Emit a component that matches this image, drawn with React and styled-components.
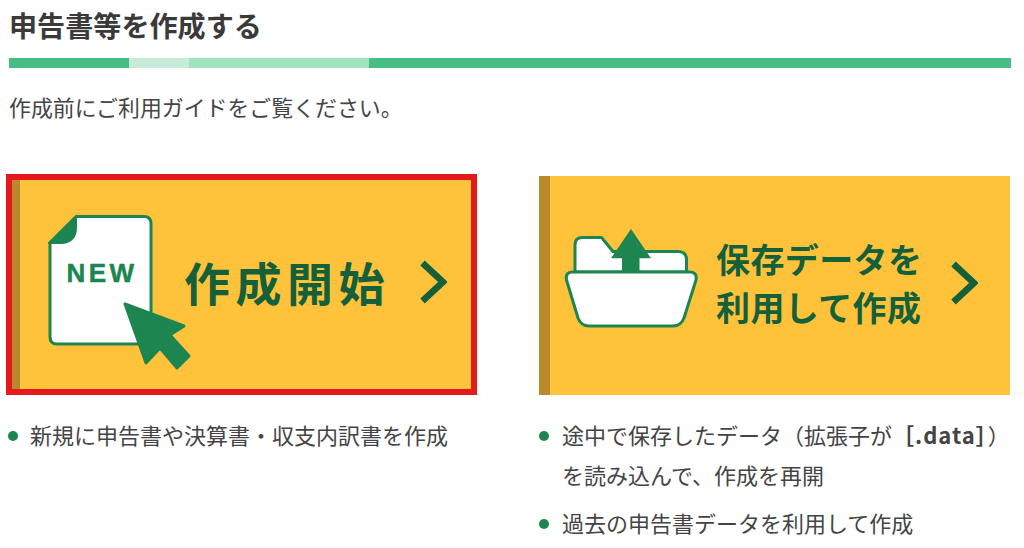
import React from "react";
import styled, { createGlobalStyle } from "styled-components";

const Global = createGlobalStyle`
  html, body { margin: 0; padding: 0; background: #fff; }
  body { font-family: "Noto Sans CJK JP", "Noto Sans", sans-serif; color: #444; }
`;

const Page = styled.main`
  width: 1024px;
  height: 548px;
  overflow: hidden;
  box-sizing: border-box;
  padding: 0 13px 0 9px;
`;

const Title = styled.h1`
  margin: 0;
  padding-top: 6px;
  height: 58px;
  box-sizing: border-box;
  font-size: 28.1px;
  line-height: 38px;
  font-weight: 700;
  color: #3a3a3a;
`;

const Bar = styled.div`
  display: flex;
  height: 10px;
`;

const Segment = styled.span`
  width: ${(p) => p.$w};
  flex: ${(p) => (p.$w ? "none" : "1")};
  background: ${(p) => p.$c};
`;

const Intro = styled.p`
  margin: 0;
  padding-top: 23px;
  height: 106px;
  box-sizing: border-box;
  font-size: 21.9px;
  line-height: 32px;
  color: #444;
`;

const Columns = styled.div`
  display: grid;
  grid-template-columns: 471px 471px;
  column-gap: 62px;
  margin-left: -3px;
`;

const Column = styled.section`
  display: flex;
  flex-direction: column;
`;

const Card = styled.a`
  display: flex;
  box-sizing: border-box;
  height: 221px;
  background: #ffc23b;
  ${(p) => (p.$selected ? "border: 6px solid #e3191b;" : "border-top: 2px solid #fff;")}
`;

const Stripe = styled.span`
  flex: none;
  width: ${(p) => p.$w}px;
  background: #b88a2b;
`;

const CardBody = styled.span`
  flex: 1;
  display: flex;
  align-items: center;
  padding-left: ${(p) => p.$pad}px;
`;

const IconBox = styled.span`
  flex: none;
  display: flex;
  width: ${(p) => p.$w}px;
  margin-top: ${(p) => p.$top || 0}px;
  svg { display: block; overflow: visible; }
`;

const CardLabel = styled.span`
  flex: none;
  width: ${(p) => p.$w}px;
  margin-left: ${(p) => p.$gap}px;
  margin-top: ${(p) => p.$top}px;
  font-weight: 700;
  color: #14603a;
  font-size: ${(p) => p.$size}px;
  line-height: ${(p) => p.$lh}px;
  letter-spacing: ${(p) => p.$ls}px;
  white-space: nowrap;
`;

const Chevron = styled.svg`
  flex: none;
  display: block;
  width: 28px;
  height: 44px;
  margin-top: -6px;
  margin-left: ${(p) => p.$gap}px;
`;

const List = styled.ul`
  list-style: none;
  margin: 0;
  padding: 19px 0 0 ${(p) => p.$inset}px;
`;

const Item = styled.li`
  position: relative;
  padding-left: ${(p) => p.$indent}px;
  margin-bottom: 8px;
  font-size: 22px;
  line-height: 40px;
  color: #444;
  white-space: nowrap;
  &::before {
    content: "";
    position: absolute;
    left: 0;
    top: 17px;
    width: 10px;
    height: 10px;
    border-radius: 50%;
    background: #1b8450;
  }
`;

const Strong = styled.b`
  font-weight: 700;
  letter-spacing: 1px;
`;

const DocIcon = () => (
  <svg width="142" height="155" viewBox="0 0 142 155">
    <path d="M29 1.500H96q7 0 7 7V122q0 7-7 7H9q-7 0-7-7V28Z" fill="#fff" stroke="#1c8550" strokeWidth="3" strokeLinejoin="round" />
    <path d="M1 28 28 1V12q0 15-14 16Z" fill="#1c8550" stroke="#1c8550" strokeWidth="2" strokeLinejoin="round" />
    <text x="18.500" y="67" fontFamily="'Liberation Sans', sans-serif" fontWeight="700" fontSize="26" letterSpacing="3.500" fill="#1c8550" stroke="#1c8550" strokeWidth="0.500">NEW</text>
    <path d="M77 89 136 111 122 120 141 141 129 153 112 133 98 148Z" fill="#1c8550" stroke="#1c8550" strokeWidth="3" strokeLinejoin="round" />
  </svg>
);

const FolderIcon = () => (
  <svg width="132" height="100" viewBox="0 0 132 100">
    <path d="M10 44V17q0-7.500 7-7.500H36.500L48 23.500H113q8.500 0 8.500 8.500V44Z" fill="#fff" stroke="#1c8550" strokeWidth="3" strokeLinejoin="round" />
    <path d="M66 1 86 30.300H74.500V44H57V30.300H46Z" fill="#1c8550" />
    <path d="M8 44H124.500q8 0 6.500 8L119 90q-3 8-11 8H24q-8 0-11-8L1.500 52q-1.500-8 6.500-8Z" fill="#fff" stroke="#1c8550" strokeWidth="3" strokeLinejoin="round" />
  </svg>
);

const ChevronIcon = ({ gap }) => (
  <Chevron $gap={gap} viewBox="0 0 28 44">
    <path d="M3.500 3 24 22 3.500 41" fill="none" stroke="#14603a" strokeWidth="6.500" />
  </Chevron>
);

export default function App() {
  return (
    <Page>
      <Global />
      <Title>申告書等を作成する</Title>
      <Bar>
        <Segment $w="120px" $c="#45bd85" />
        <Segment $w="60px" $c="#c6ebd8" />
        <Segment $w="180px" $c="#a0e3bf" />
        <Segment $c="#45bd85" />
      </Bar>
      <Intro>作成前にご利用ガイドをご覧ください。</Intro>
      <Columns>
        <Column>
          <Card $selected>
            <Stripe $w={8} />
            <CardBody $pad={28}>
              <IconBox $w={140} $top={16}><DocIcon /></IconBox>
              <CardLabel $w={201} $gap={-4} $top={-8} $size={46} $lh={56} $ls={5.500}>作成開始</CardLabel>
              <ChevronIcon gap={34} />
            </CardBody>
          </Card>
          <List $inset={2}>
            <Item $indent={22}>新規に申告書や決算書・収支内訳書を作成</Item>
          </List>
        </Column>
        <Column>
          <Card>
            <Stripe $w={11} />
            <CardBody $pad={15}>
              <IconBox $w={132} $top={-16}><FolderIcon /></IconBox>
              <CardLabel $w={205} $gap={19} $top={-6} $size={34} $lh={48} $ls={0.400}>保存データを<br />利用して作成</CardLabel>
              <ChevronIcon gap={29} />
            </CardBody>
          </Card>
          <List $inset={0}>
            <Item $indent={23}>途中で保存したデータ（拡張子が<Strong>［.data］</Strong>）<br />を読み込んで、作成を再開</Item>
            <Item $indent={23}>過去の申告書データを利用して作成</Item>
          </List>
        </Column>
      </Columns>
    </Page>
  );
}
